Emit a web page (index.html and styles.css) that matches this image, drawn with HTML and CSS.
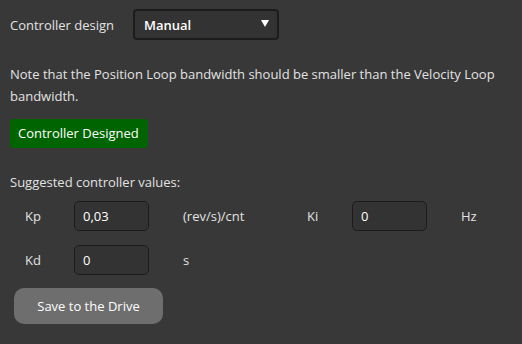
FILE: index.html
```html
<!DOCTYPE html>
<html lang="en">
  <head>
    <meta charset="UTF-8" />
    <meta name="viewport" content="width=device-width, initial-scale=1.0" />
    <title>Controller Design</title>
    <link rel="stylesheet" href="styles.css">
  </head>
  <body>
    <div class="panel">
      <div class="design-row">
        <span class="design-label">Controller design</span>
        <div class="select">
          <span>Manual</span>
          <span class="arrow"></span>
        </div>
      </div>

      <p class="note">
        Note that the Position Loop bandwidth should be smaller than the Velocity Loop bandwidth.
      </p>

      <div class="status">Controller Designed</div>

      <p class="suggested">Suggested controller values:</p>

      <div class="gains">
        <span class="gain-label">Kp</span>
        <input class="gain-input" type="text" value="0,03">
        <span class="unit">(rev/s)/cnt</span>
        <span class="gain-label">Ki</span>
        <input class="gain-input" type="text" value="0">
        <span class="unit">Hz</span>

        <span class="gain-label">Kd</span>
        <input class="gain-input" type="text" value="0">
        <span class="unit">s</span>
      </div>

      <button class="save">Save to the Drive</button>
    </div>
  </body>
</html>
```

FILE: styles.css
```css
body {
  margin: 0;
  background-color: #383838;
  font-family: "Open Sans", "Noto Sans", sans-serif;
  font-size: 13px;
  color: #e2e2e2;
}

.panel {
  padding: 9px 10px 0 10px;
}

.design-row {
  display: flex;
  align-items: center;
}

.design-label {
  width: 123px;
}

.select {
  box-sizing: border-box;
  width: 146px;
  height: 31px;
  border: 2px solid #1c1c1c;
  border-radius: 4px;
  background-color: #333333;
  display: flex;
  align-items: center;
  justify-content: space-between;
  padding: 0 8px 0 9px;
  color: #ffffff;
  font-weight: 600;
}

/* small filled triangle like the native dropdown */
.select .arrow {
  width: 0;
  height: 0;
  border-left: 4px solid transparent;
  border-right: 4px solid transparent;
  border-top: 7px solid #ffffff;
  margin-bottom: 2px;
}

.note {
  margin: 23px 0 0 0;
  line-height: 22px;
}

.status {
  display: inline-block;
  margin-top: 12px;
  background-color: #006400;
  color: #ffffff;
  border-radius: 3px;
  height: 29px;
  line-height: 29px;
  padding: 0 9px 0 8px;
}

.suggested {
  margin: 23px 0 0 0;
  line-height: 22px;
}

.gains {
  display: grid;
  grid-template-columns: 49px 75px 158px 45px 75px auto;
  grid-auto-rows: 30px;
  row-gap: 14px;
  align-items: center;
  margin: 8px 0 0 15px;
}

.gain-input {
  box-sizing: border-box;
  width: 75px;
  height: 30px;
  border: 1px solid #1c1c1c;
  border-radius: 5px;
  background-color: #333333;
  color: #ffffff;
  font-family: inherit;
  font-size: 13px;
  padding: 0 8px;
  outline: none;
}

.unit {
  padding-left: 34px;
}

.save {
  display: block;
  margin: 13px 0 0 4px;
  width: 149px;
  height: 36px;
  border: none;
  border-radius: 10px;
  background-color: #6e6e6e;
  color: #ffffff;
  font-family: inherit;
  font-size: 13px;
  cursor: pointer;
}
```
